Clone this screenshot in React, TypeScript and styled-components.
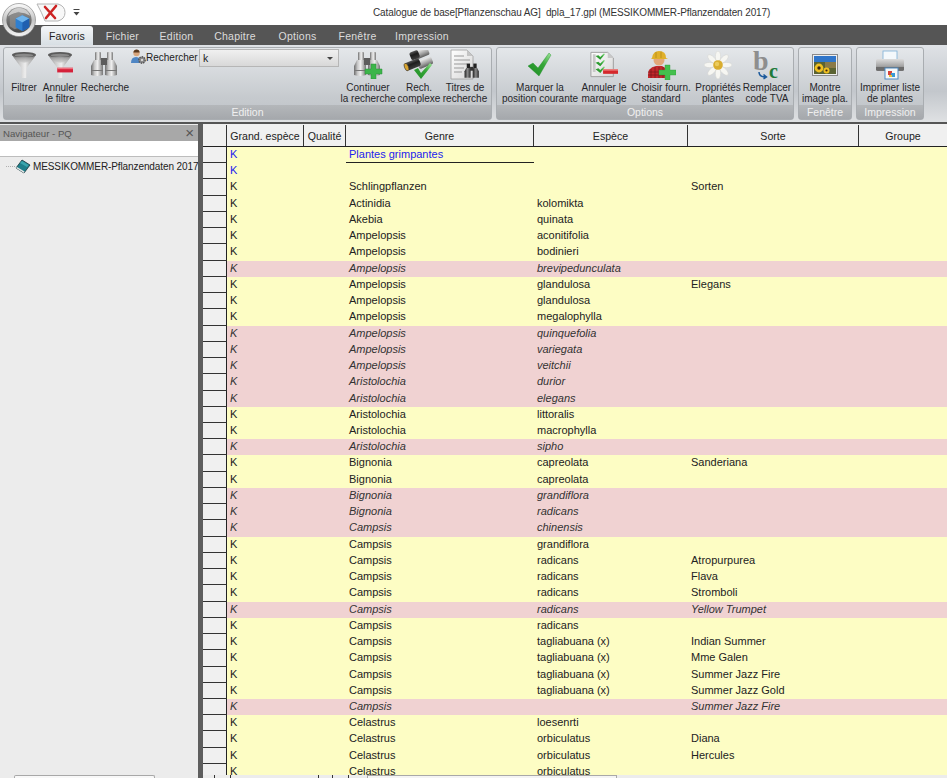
import React, { ReactElement, ReactNode } from "react"
import styled, { createGlobalStyle } from "styled-components"

const UI_FONT = `"Liberation Sans", Arial, sans-serif`

const GlobalStyle = createGlobalStyle`
  html, body {
    margin: 0;
    padding: 0;
    background: #ececec;
  }
  body {
    font-family: ${UI_FONT};
    font-size: 11px;
    color: #222;
  }
`

const Shell = styled.div`
  display: flex;
  flex-direction: column;
  position: relative;
  width: 947px;
  height: 778px;
  overflow: hidden;
`

/* ---- title bar ---- */

const TitleBar = styled.div`
  display: flex;
  align-items: center;
  flex: none;
  height: 25px;
  padding-left: 373px;
  background: #fff;
  color: #333;
  font-size: 10px;
  letter-spacing: -0.12px;
  white-space: pre;
`

const LogoOrb = styled.svg`
  position: absolute;
  left: 2px;
  top: 3px;
  width: 34px;
  height: 34px;
`

const QuickButton = styled.svg`
  position: absolute;
  left: 36px;
  top: 3px;
  width: 30px;
  height: 19px;
`

const QuickMenu = styled.svg`
  position: absolute;
  left: 73px;
  top: 9px;
  width: 7px;
  height: 7px;
`

/* ---- tabs ---- */

const TabStrip = styled.div`
  display: flex;
  flex: none;
  height: 20px;
  padding-left: 41px;
  background: #555;
`

const Tab = styled.div<{ $active?: boolean; $width: number }>`
  display: flex;
  align-items: center;
  justify-content: center;
  flex: none;
  width: ${(p) => p.$width}px;
  margin-top: 1px;
  border-radius: 3px 3px 0 0;
  font-size: 10.5px;
  letter-spacing: 0.25px;
  color: ${(p) => (p.$active ? "#222" : "#dcdcdc")};
  background: ${(p) => (p.$active ? "linear-gradient(#f4f6f8, #d8dfe4)" : "transparent")};
`

/* ---- ribbon ---- */

const Ribbon = styled.div`
  display: flex;
  flex: none;
  gap: 4px;
  height: 77px;
  padding: 2px 0 2px 3px;
  box-sizing: border-box;
  background: linear-gradient(#dfe2e6, #c3c7cc 60%, #dfe1e3);
`

const Group = styled.div<{ $width: number }>`
  display: flex;
  flex-direction: column;
  flex: none;
  width: ${(p) => p.$width}px;
  box-sizing: border-box;
  border: 1px solid #a9adb1;
  border-radius: 3px;
  background: linear-gradient(#e4e7ea, #c6cace 70%, #bfc3c8);
`

const GroupBody = styled.div<{ $inset?: number }>`
  display: flex;
  flex: 1;
  padding-left: ${(p) => p.$inset ?? 0}px;
`

const GroupCaption = styled.div`
  flex: none;
  height: 14px;
  line-height: 15px;
  text-align: center;
  color: #f0f0f0;
  font-size: 10.5px;
  background: linear-gradient(#b4b7ba, #a5a8ac);
`

const ToolButton = styled.div<{ $width?: number }>`
  display: flex;
  flex-direction: column;
  align-items: center;
  flex: ${(p) => (p.$width ? "none" : "1")};
  width: ${(p) => (p.$width ? `${p.$width}px` : "auto")};
`

const ToolIcon = styled.div`
  display: flex;
  align-items: center;
  justify-content: center;
  height: 33px;
`

const ToolLabel = styled.div`
  font-size: 10px;
  line-height: 11px;
  margin-top: 1px;
  color: #26262a;
  text-align: center;
  white-space: pre;
`

const SearchBlock = styled.div`
  display: flex;
  align-items: flex-start;
  flex: none;
  width: 209px;
  padding-top: 1px;
`

const SearchLabel = styled.div`
  margin-top: 1px;
  width: 53px;
  font-size: 10px;
  line-height: 16px;
  white-space: nowrap;
`

const Combo = styled.div`
  display: flex;
  align-items: center;
  justify-content: space-between;
  width: 140px;
  height: 18px;
  padding: 0 5px 0 3px;
  box-sizing: border-box;
  border: 1px solid #b6b6b6;
  background: linear-gradient(#f0f0f0, #d8d8d8);
  font-size: 10.5px;
`

const ComboArrow = styled.span`
  width: 0;
  height: 0;
  border-left: 3px solid transparent;
  border-right: 3px solid transparent;
  border-top: 3px solid #444;
`

const RibbonEdge = styled.div`
  height: 2px;
  flex: none;
  background: #555;
`

/* ---- work area ---- */

const Workspace = styled.div`
  display: flex;
  flex: 1;
  min-height: 0;
`

const Navigator = styled.div`
  display: flex;
  flex-direction: column;
  flex: none;
  width: 198px;
  background: #ececec;
`

const NavHeader = styled.div`
  display: flex;
  align-items: center;
  justify-content: space-between;
  flex: none;
  height: 16px;
  margin-top: 1px;
  padding: 0 4px 0 3px;
  background: #a8a8a8;
  color: #555;
  font-size: 9.6px;
`

const NavClose = styled.span`
  font-size: 15px;
  line-height: 16px;
  color: #555;
`

const NavSearch = styled.div`
  flex: none;
  height: 15px;
  background: #fff;
  border-bottom: 1px solid #bdbdbd;
`

const NavTree = styled.div`
  flex: 1;
`

const TreeRow = styled.div`
  display: flex;
  align-items: center;
  height: 18px;
  padding-left: 6px;
  color: #222;
  font-size: 10px;
  letter-spacing: -0.1px;
  white-space: nowrap;
`

const TreeDots = styled.span`
  flex: none;
  width: 9px;
  border-top: 1px dotted #b0b0b0;
`

const TreeBook = styled.svg`
  flex: none;
  width: 16px;
  height: 15px;
`

const TreeText = styled.span`
  margin-left: 2px;
`

const NavFooter = styled.div`
  flex: none;
  height: 3px;
  margin-left: 14px;
  width: 141px;
  box-sizing: border-box;
  border: 1px solid #a8a8a8;
  border-bottom: none;
  border-radius: 2px 2px 0 0;
  background: #f8f8f8;
`

const Splitter = styled.div`
  flex: none;
  width: 5px;
  background: #5e5e5e;
`

const GridPane = styled.div`
  display: flex;
  flex-direction: column;
  flex: 1;
  min-width: 0;
  padding-top: 1px;
  background: #f0f0f0;
`

const GridBody = styled.div`
  flex: 1;
  min-height: 0;
  overflow: hidden;
`

const COLUMNS = "24px 77px 42px 188px 154px 171px 89px"

const HeaderRow = styled.div`
  display: grid;
  grid-template-columns: ${COLUMNS};
  height: 22px;
  box-sizing: border-box;
  border-bottom: 1px solid #222;
`

const HeaderCell = styled.div`
  display: flex;
  align-items: center;
  justify-content: center;
  border-right: 1px solid #333;
  font-size: 10.6px;
  white-space: nowrap;
  overflow: hidden;
`

const DataRow = styled.div<{ $kind: RowKind }>`
  display: grid;
  grid-template-columns: ${COLUMNS};
  height: 16.24px;
  font-size: 11px;
  line-height: 15px;
  font-style: ${(p) => (p.$kind === "off" ? "italic" : "normal")};
  background: ${(p) => (p.$kind === "off" ? "#f0d2d2" : "#fdfdc4")};
  color: ${(p) => (p.$kind === "off" ? "#333" : "#222")};
`

const RowHead = styled.div`
  box-sizing: border-box;
  border-right: 1px solid #222;
  border-bottom: 1px solid #333;
  background: #f0f0f0;
`

const Cell = styled.div<{ $blue?: boolean; $rule?: boolean }>`
  padding-left: 3px;
  white-space: nowrap;
  overflow: hidden;
  color: ${(p) => (p.$blue ? "#2222ee" : "inherit")};
  border-bottom: ${(p) => (p.$rule ? "1px solid #222" : "none")};
  box-sizing: border-box;
`

const Scrollbar = styled.div`
  display: flex;
  flex: none;
  height: 3px;
  background: #ececec;
`

const ScrollTick = styled.div<{ $width: number }>`
  flex: none;
  width: ${(p) => p.$width}px;
  box-sizing: border-box;
  border-right: 1px solid #333;
`

const ScrollThumb = styled.div`
  flex: none;
  width: 250px;
  margin-left: 18px;
  box-sizing: border-box;
  border: 1px solid #a8a8a8;
  border-bottom: none;
  background: #f4f4f4;
`

/* ---- icons ---- */

const HiddenDefs = styled.svg`
  position: absolute;
  width: 0;
  height: 0;
`

function IconDefs(): ReactElement {
  return (
    <HiddenDefs aria-hidden="true">
      <defs>
        <linearGradient id="metal" x1="0" x2="1" y1="0" y2="0">
          <stop offset="0" stopColor="#6d6d6d" />
          <stop offset="0.3" stopColor="#c9c9c9" />
          <stop offset="0.55" stopColor="#eeeeee" />
          <stop offset="1" stopColor="#767676" />
        </linearGradient>
        <linearGradient id="funnelBody" x1="0" x2="0" y1="0" y2="1">
          <stop offset="0" stopColor="#6a6a6a" />
          <stop offset="0.5" stopColor="#a8a8a8" />
          <stop offset="1" stopColor="#d0d0d0" />
        </linearGradient>
        <linearGradient id="darkMetal" x1="0" x2="1" y1="0" y2="0">
          <stop offset="0" stopColor="#222" />
          <stop offset="0.5" stopColor="#8a8a8a" />
          <stop offset="1" stopColor="#2a2a2a" />
        </linearGradient>
        <linearGradient id="darkBarrel" x1="0" x2="0" y1="0" y2="1">
          <stop offset="0" stopColor="#555" />
          <stop offset="0.4" stopColor="#1d1d1d" />
          <stop offset="1" stopColor="#3c3c3c" />
        </linearGradient>
        <linearGradient id="silverBarrel" x1="0" x2="0" y1="0" y2="1">
          <stop offset="0" stopColor="#e8e8e8" />
          <stop offset="0.6" stopColor="#9a9a9a" />
          <stop offset="1" stopColor="#5c5c5c" />
        </linearGradient>
        <linearGradient id="tick" x1="0" x2="1" y1="1" y2="0">
          <stop offset="0" stopColor="#1c8a24" />
          <stop offset="0.6" stopColor="#37a838" />
          <stop offset="1" stopColor="#9fe69a" />
        </linearGradient>
        <linearGradient id="paper" x1="0" x2="1" y1="0" y2="1">
          <stop offset="0" stopColor="#fff" />
          <stop offset="1" stopColor="#d6d6d6" />
        </linearGradient>
        <linearGradient id="ring" x1="0" x2="0" y1="0" y2="1">
          <stop offset="0" stopColor="#fbfbfb" />
          <stop offset="0.5" stopColor="#c4c4c4" />
          <stop offset="1" stopColor="#f4f4f4" />
        </linearGradient>
        <linearGradient id="orbCore" x1="0" x2="0" y1="0" y2="1">
          <stop offset="0" stopColor="#9a9a9a" />
          <stop offset="1" stopColor="#4a4a4a" />
        </linearGradient>
        <linearGradient id="printer" x1="0" x2="0" y1="0" y2="1">
          <stop offset="0" stopColor="#dcdcdc" />
          <stop offset="0.55" stopColor="#a8a8a8" />
          <stop offset="1" stopColor="#6c6c6c" />
        </linearGradient>
      </defs>
    </HiddenDefs>
  )
}

function Funnel({ bar }: { bar?: boolean }): ReactElement {
  return (
    <svg width="26" height="28" viewBox="0 0 28 30">
      <path d="M1 4 Q14 11 27 4 L17 18 L16.5 29 L11.5 29 L11 18 Z" fill="url(#metal)" />
      <path d="M1 4 Q14 11 27 4 L22 11 Q14 14 6 11 Z" fill="url(#funnelBody)" opacity="0.85" />
      <ellipse cx="14" cy="4" rx="13" ry="3" fill="#5b5b5b" />
      <ellipse cx="14" cy="4.6" rx="10" ry="1.8" fill="#8a8a8a" />
      {bar && <rect x="11" y="18" width="17" height="5" fill="#d5213a" />}
      {bar && <rect x="11" y="18" width="17" height="1.5" fill="#f0717f" />}
    </svg>
  )
}

function BinocularShape(): ReactElement {
  return (
    <>
      <rect x="5" y="1" width="6" height="9" rx="1" fill="url(#metal)" />
      <rect x="17" y="1" width="6" height="9" rx="1" fill="url(#metal)" />
      <path d="M4 9 L11 9 L13 12 L13 24 Q7 26 1 24 L1 15 Z" fill="url(#metal)" />
      <path d="M24 9 L17 9 L15 12 L15 24 Q21 26 27 24 L27 15 Z" fill="url(#metal)" />
      <rect x="11" y="7" width="6" height="7" fill="#5c5c5c" />
      <rect x="1" y="19" width="12" height="1" fill="#777" />
      <rect x="15" y="19" width="12" height="1" fill="#777" />
    </>
  )
}

function Binoculars({ plus }: { plus?: boolean }): ReactElement {
  return (
    <svg width="30" height="28" viewBox="0 0 30 28">
      <BinocularShape />
      {plus && <path d="M18 13 h5 v5 h6 v5 h-6 v5 h-5 v-5 h-6 v-5 h6 Z" fill="#3cb54a" stroke="#2b8f39" strokeWidth="0.5" />}
    </svg>
  )
}

function ComplexSearch(): ReactElement {
  return (
    <svg width="32" height="30" viewBox="0 0 32 30">
      <g transform="rotate(-22 16 12)">
        <rect x="14" y="1" width="15" height="8" rx="2" fill="url(#silverBarrel)" />
        <rect x="14" y="11" width="15" height="8" rx="2" fill="url(#silverBarrel)" />
        <rect x="2" y="8" width="15" height="8" rx="2.5" fill="url(#darkBarrel)" />
        <rect x="10" y="0" width="9" height="8" rx="2" fill="url(#darkBarrel)" />
        <ellipse cx="2.5" cy="12" rx="2" ry="4" fill="#d9a530" stroke="#333" strokeWidth="0.6" />
      </g>
      <path d="M11 20 L15 18 L18 23 L27 13 L29 15 L18 29 Z" fill="url(#tick)" />
    </svg>
  )
}

function TitleSearch(): ReactElement {
  return (
    <svg width="30" height="32" viewBox="0 0 30 32">
      <path d="M1 1 L17 1 L23 7 L23 30 L1 30 Z" fill="url(#paper)" stroke="#a0a0a0" strokeWidth="0.8" />
      <path d="M17 1 L17 7 L23 7 Z" fill="#c4c4c4" />
      <path d="M4 7 H14 M4 11 H20 M4 15 H17 M4 19 H14 M4 23 H12" stroke="#9a9a9a" strokeWidth="1.2" />
      <g transform="translate(14 14) scale(0.55)">
        <rect x="5" y="1" width="6" height="9" fill="#222" />
        <rect x="17" y="1" width="6" height="9" fill="#222" />
        <path d="M4 9 L11 9 L12 12 L12 27 L1 27 L1 15 Z" fill="url(#darkMetal)" />
        <path d="M24 9 L17 9 L16 12 L16 27 L27 27 L27 15 Z" fill="url(#darkMetal)" />
        <rect x="11" y="7" width="6" height="7" fill="#333" />
      </g>
    </svg>
  )
}

function GreenTick(): ReactElement {
  return (
    <svg width="24" height="24" viewBox="0 0 24 24">
      <path d="M0 13 L5 10 L10 15 L21 0 L23 2 L11 23 Z" fill="url(#tick)" stroke="#1d8a27" strokeWidth="0.4" />
    </svg>
  )
}

function MiniTick({ y }: { y: number }): ReactElement {
  return <path d={`M6 ${y + 1} l3 -1 l2 2 l4 -4 l1 1 l-5 6 Z`} fill="url(#tick)" />
}

function UnmarkList(): ReactElement {
  return (
    <svg width="28" height="27" viewBox="0 0 30 28">
      <path d="M1 1 L19 1 L25 7 L25 27 L1 27 Z" fill="url(#paper)" stroke="#9c9c9c" />
      <path d="M19 1 L19 7 L25 7 Z" fill="#c9c9c9" />
      <rect x="3" y="3" width="3" height="19" fill="#c8c8c8" />
      <MiniTick y={4} />
      <MiniTick y={11} />
      <MiniTick y={18} />
      <rect x="14" y="19" width="16" height="5" fill="#d5282c" />
      <rect x="14" y="19" width="16" height="1.5" fill="#ee8a86" />
    </svg>
  )
}

function Worker(): ReactElement {
  return (
    <svg width="30" height="30" viewBox="0 0 30 30">
      <path d="M2 28 Q1 17 10 16 L16 16 Q22 18 22 28 Z" fill="#c3272b" />
      <path d="M5 19 V28 M9 17 V28 M13 17 V28 M17 17 V28 M2 22 H22 M2 25 H22" stroke="#7c1a1c" strokeWidth="0.8" />
      <circle cx="13" cy="10" r="5.5" fill="#e2a77a" />
      <path d="M6 8 Q7 1 13 1 Q20 1 20 8 L22 9 L5 9 Z" fill="#e0b02a" />
      <path d="M10 2 L10 8 M15 1.5 L15 8" stroke="#b58a16" strokeWidth="0.8" />
      <path d="M19 15 h5 v5 h6 v5 h-6 v5 h-5 v-5 h-6 v-5 h6 Z" fill="#44c04d" stroke="#2f9a3a" strokeWidth="0.4" />
    </svg>
  )
}

function Daisy(): ReactElement {
  const petals = [0, 45, 90, 135, 180, 225, 270, 315]
  return (
    <svg width="28" height="28" viewBox="0 0 28 28">
      {petals.map((angle) => (
        <ellipse key={angle} cx="14" cy="5.5" rx="2.6" ry="5.5" fill="#f6f6f2" stroke="#d4d4d0" strokeWidth="0.5" transform={`rotate(${angle} 14 14)`} />
      ))}
      <circle cx="14" cy="14" r="4.8" fill="#d9ad2e" />
      <circle cx="13" cy="13" r="2.2" fill="#eccb5c" />
    </svg>
  )
}

const SwapIcon = styled.svg`
  overflow: visible;
`

const SwapB = styled.text`
  font-family: "Liberation Serif", serif;
  font-weight: bold;
  font-size: 28px;
  fill: #8e8e8e;
`

const SwapC = styled.text`
  font-family: "Liberation Serif", serif;
  font-weight: bold;
  font-size: 20px;
  fill: #1f7a3a;
`

function SwapCode(): ReactElement {
  return (
    <SwapIcon width="28" height="28" viewBox="0 0 28 28">
      <SwapB x="0" y="19">b</SwapB>
      <SwapC x="16" y="27">c</SwapC>
      <path d="M6 21 Q6 26 13 26 M10.5 23.5 L13.5 26 L10.5 28" fill="none" stroke="#1d5a9c" strokeWidth="1.5" />
    </SwapIcon>
  )
}

function PlantPhoto(): ReactElement {
  return (
    <svg width="26" height="22" viewBox="0 0 26 22">
      <rect x="0.5" y="0.5" width="25" height="21" fill="#eee" stroke="#8a8a8a" />
      <rect x="2" y="2" width="22" height="6" fill="#2f75c9" />
      <rect x="2" y="8" width="22" height="12" fill="#5a6332" />
      <rect x="13" y="8" width="11" height="6" fill="#8a7a48" />
      <circle cx="7" cy="14" r="4.4" fill="#f0c020" />
      <circle cx="7" cy="14" r="1.7" fill="#3a2410" />
      <circle cx="14.5" cy="16.5" r="3" fill="#f0c020" />
      <circle cx="14.5" cy="16.5" r="1.1" fill="#3a2410" />
    </svg>
  )
}

function Printer(): ReactElement {
  return (
    <svg width="30" height="30" viewBox="0 0 30 30">
      <rect x="8" y="1" width="14" height="9" fill="#f4f8fb" stroke="#7eb0d8" strokeWidth="0.8" />
      <rect x="1" y="9" width="28" height="12" rx="1.5" fill="url(#printer)" />
      <rect x="1" y="17" width="28" height="3" fill="#6c6c6c" />
      <rect x="10" y="18" width="13" height="11" fill="#f8f8f8" stroke="#4f8cc4" />
      <rect x="13" y="21" width="4" height="4" fill="#d6423a" />
      <rect x="16" y="23" width="4" height="4" fill="#3a9ad6" />
      <rect x="14" y="25" width="3" height="2" fill="#e8c33a" />
    </svg>
  )
}

function PersonGear(): ReactElement {
  return (
    <svg width="15" height="15" viewBox="0 0 15 15">
      <path d="M0 14 Q0 8 5 8 Q10 8 10 14 Z" fill="#4f86c4" />
      <circle cx="5.5" cy="4" r="3.2" fill="#d9a67c" />
      <path d="M2.3 3.5 Q3 0.5 5.5 0.5 Q8.4 0.5 8.6 3.5 Z" fill="#5a3a20" />
      <circle cx="11" cy="11" r="3.2" fill="#8a8a8a" stroke="#555" strokeWidth="1.4" strokeDasharray="1.4 1" />
      <circle cx="11" cy="11" r="1.1" fill="#e8e8e8" />
    </svg>
  )
}

function BookIcon(): ReactElement {
  return (
    <TreeBook viewBox="0 0 16 15">
      <path d="M7 1 L15 6 L9 14 L1 9 Z" fill="#1f7f8a" stroke="#15343a" strokeWidth="0.8" />
      <path d="M1 9 L9 14 L9.5 12.5 L2 8 Z" fill="#e6e6e6" />
      <path d="M7 2 L13.5 6 L12 8 L5 4 Z" fill="#3aa5ad" />
    </TreeBook>
  )
}

function AppOrb(): ReactElement {
  return (
    <LogoOrb viewBox="0 0 35 35">
      <circle cx="17.5" cy="17.5" r="17" fill="url(#ring)" stroke="#777" strokeWidth="0.6" />
      <circle cx="17.5" cy="17.5" r="13" fill="url(#orbCore)" />
      <path d="M6 14 Q17 6 29 13 Q26 5.5 17.5 5 Q9 5.5 6 14 Z" fill="#e4e4e4" opacity="0.7" />
      <path d="M8 13 L17 9 L22 12 L22 24 L13 27 L8 24 Z" fill="#8f8f8f" opacity="0.7" />
      <path d="M14 16 L21 12.5 L28 16 L28 25 L21 29 L14 25 Z" fill="#2f7fd0" />
      <path d="M14 16 L21 12.5 L28 16 L21 20 Z" fill="#6fb4ec" />
      <path d="M21 20 L28 16 L28 25 L21 29 Z" fill="#1f5fb0" />
    </LogoOrb>
  )
}

function CloseQuick(): ReactElement {
  return (
    <QuickButton viewBox="0 0 30 19">
      <path d="M1 1 H22 Q29 3 29 9.5 Q29 16 22 18 H9 Q6 10 1 1 Z" fill="#f8f8f8" stroke="#b4b4b4" />
      <path d="M9 4 L19 15 M20 3 L10 15" stroke="#cc2222" strokeWidth="2.6" strokeLinecap="round" />
    </QuickButton>
  )
}

function QuickCustomize(): ReactElement {
  return (
    <QuickMenu viewBox="0 0 7 7">
      <rect x="0.5" y="0" width="6" height="1" fill="#444" />
      <path d="M0.5 3 H6.5 L3.5 6.5 Z" fill="#444" />
    </QuickMenu>
  )
}

/* ---- data ---- */

type RowKind = "plain" | "off" | "title"
type RowData = [RowKind, string, string, string]

const ROWS: RowData[] = [
  ["title", "Plantes grimpantes", "", ""],
  ["title", "", "", ""],
  ["plain", "Schlingpflanzen", "", "Sorten"],
  ["plain", "Actinidia", "kolomikta", ""],
  ["plain", "Akebia", "quinata", ""],
  ["plain", "Ampelopsis", "aconitifolia", ""],
  ["plain", "Ampelopsis", "bodinieri", ""],
  ["off", "Ampelopsis", "brevipedunculata", ""],
  ["plain", "Ampelopsis", "glandulosa", "Elegans"],
  ["plain", "Ampelopsis", "glandulosa", ""],
  ["plain", "Ampelopsis", "megalophylla", ""],
  ["off", "Ampelopsis", "quinquefolia", ""],
  ["off", "Ampelopsis", "variegata", ""],
  ["off", "Ampelopsis", "veitchii", ""],
  ["off", "Aristolochia", "durior", ""],
  ["off", "Aristolochia", "elegans", ""],
  ["plain", "Aristolochia", "littoralis", ""],
  ["plain", "Aristolochia", "macrophylla", ""],
  ["off", "Aristolochia", "sipho", ""],
  ["plain", "Bignonia", "capreolata", "Sanderiana"],
  ["plain", "Bignonia", "capreolata", ""],
  ["off", "Bignonia", "grandiflora", ""],
  ["off", "Bignonia", "radicans", ""],
  ["off", "Campsis", "chinensis", ""],
  ["plain", "Campsis", "grandiflora", ""],
  ["plain", "Campsis", "radicans", "Atropurpurea"],
  ["plain", "Campsis", "radicans", "Flava"],
  ["plain", "Campsis", "radicans", "Stromboli"],
  ["off", "Campsis", "radicans", "Yellow Trumpet"],
  ["plain", "Campsis", "radicans", ""],
  ["plain", "Campsis", "tagliabuana (x)", "Indian Summer"],
  ["plain", "Campsis", "tagliabuana (x)", "Mme Galen"],
  ["plain", "Campsis", "tagliabuana (x)", "Summer Jazz Fire"],
  ["plain", "Campsis", "tagliabuana (x)", "Summer Jazz Gold"],
  ["off", "Campsis", "", "Summer Jazz Fire"],
  ["plain", "Celastrus", "loesenrti", ""],
  ["plain", "Celastrus", "orbiculatus", "Diana"],
  ["plain", "Celastrus", "orbiculatus", "Hercules"],
  ["plain", "Celastrus", "orbiculatus", ""],
]

const TABS: [string, number][] = [
  ["Fichier", 53],
  ["Edition", 55],
  ["Chapitre", 62],
  ["Options", 63],
  ["Fenêtre", 57],
  ["Impression", 72],
]

function Tool({ width, label, children }: { width?: number; label: string; children: ReactNode }): ReactElement {
  return (
    <ToolButton $width={width}>
      <ToolIcon>{children}</ToolIcon>
      <ToolLabel>{label}</ToolLabel>
    </ToolButton>
  )
}

export default function App(): ReactElement {
  return (
    <Shell>
      <GlobalStyle />
      <IconDefs />
      <TitleBar>{"Catalogue de base[Pflanzenschau AG]  dpla_17.gpl (MESSIKOMMER-Pflanzendaten 2017)"}</TitleBar>
      <TabStrip>
        <Tab $active $width={52}>Favoris</Tab>
        <Tab $width={3} />
        {TABS.map(([name, width]) => (
          <Tab key={name} $width={width}>{name}</Tab>
        ))}
      </TabStrip>
      <Ribbon>
        <Group $width={489}>
          <GroupBody $inset={3}>
            <Tool width={34} label={"Filtrer"}><Funnel /></Tool>
            <Tool width={38} label={"Annuler\nle filtre"}><Funnel bar /></Tool>
            <Tool width={52} label={"Recherche"}><Binoculars /></Tool>
            <SearchBlock>
              <PersonGear />
              <SearchLabel>Rechercher</SearchLabel>
              <Combo>
                k
                <ComboArrow />
              </Combo>
            </SearchBlock>
            <Tool width={56} label={"Continuer\nla recherche"}><Binoculars plus /></Tool>
            <Tool width={46} label={"Rech.\ncomplexe"}><ComplexSearch /></Tool>
            <Tool width={46} label={"Titres de\nrecherche"}><TitleSearch /></Tool>
          </GroupBody>
          <GroupCaption>Edition</GroupCaption>
        </Group>
        <Group $width={298}>
          <GroupBody>
            <Tool width={86} label={"Marquer la\nposition courante"}><GreenTick /></Tool>
            <Tool width={42} label={"Annuler le\nmarquage"}><UnmarkList /></Tool>
            <Tool width={72} label={"Choisir fourn.\nstandard"}><Worker /></Tool>
            <Tool width={42} label={"Propriétés\nplantes"}><Daisy /></Tool>
            <Tool width={56} label={"Remplacer\ncode TVA"}><SwapCode /></Tool>
          </GroupBody>
          <GroupCaption>Options</GroupCaption>
        </Group>
        <Group $width={54}>
          <GroupBody>
            <Tool label={"Montre\nimage pla."}><PlantPhoto /></Tool>
          </GroupBody>
          <GroupCaption>Fenêtre</GroupCaption>
        </Group>
        <Group $width={68}>
          <GroupBody>
            <Tool label={"Imprimer liste\nde plantes"}><Printer /></Tool>
          </GroupBody>
          <GroupCaption>Impression</GroupCaption>
        </Group>
      </Ribbon>
      <RibbonEdge />
      <Workspace>
        <Navigator>
          <NavHeader>
            Navigateur - PQ
            <NavClose>×</NavClose>
          </NavHeader>
          <NavSearch />
          <NavTree>
            <TreeRow>
              <TreeDots />
              <BookIcon />
              <TreeText>MESSIKOMMER-Pflanzendaten 2017</TreeText>
            </TreeRow>
          </NavTree>
          <NavFooter />
        </Navigator>
        <Splitter />
        <GridPane>
          <GridBody>
            <HeaderRow>
              <HeaderCell />
              <HeaderCell>Grand. espèce</HeaderCell>
              <HeaderCell>Qualité</HeaderCell>
              <HeaderCell>Genre</HeaderCell>
              <HeaderCell>Espèce</HeaderCell>
              <HeaderCell>Sorte</HeaderCell>
              <HeaderCell>Groupe</HeaderCell>
            </HeaderRow>
            {ROWS.map(([kind, genre, species, variety], index) => (
              <DataRow key={index} $kind={kind}>
                <RowHead />
                <Cell $blue={kind === "title"}>K</Cell>
                <Cell />
                <Cell $blue={kind === "title"} $rule={kind === "title" && index === 0}>{genre}</Cell>
                <Cell>{species}</Cell>
                <Cell>{variety}</Cell>
                <Cell />
              </DataRow>
            ))}
          </GridBody>
          <Scrollbar>
            <ScrollTick $width={12} />
            <ScrollTick $width={16} />
            <ScrollTick $width={88} />
            <ScrollTick $width={14} />
            <ScrollTick $width={16} />
            <ScrollThumb />
          </Scrollbar>
        </GridPane>
      </Workspace>
      <AppOrb />
      <CloseQuick />
      <QuickCustomize />
    </Shell>
  )
}
